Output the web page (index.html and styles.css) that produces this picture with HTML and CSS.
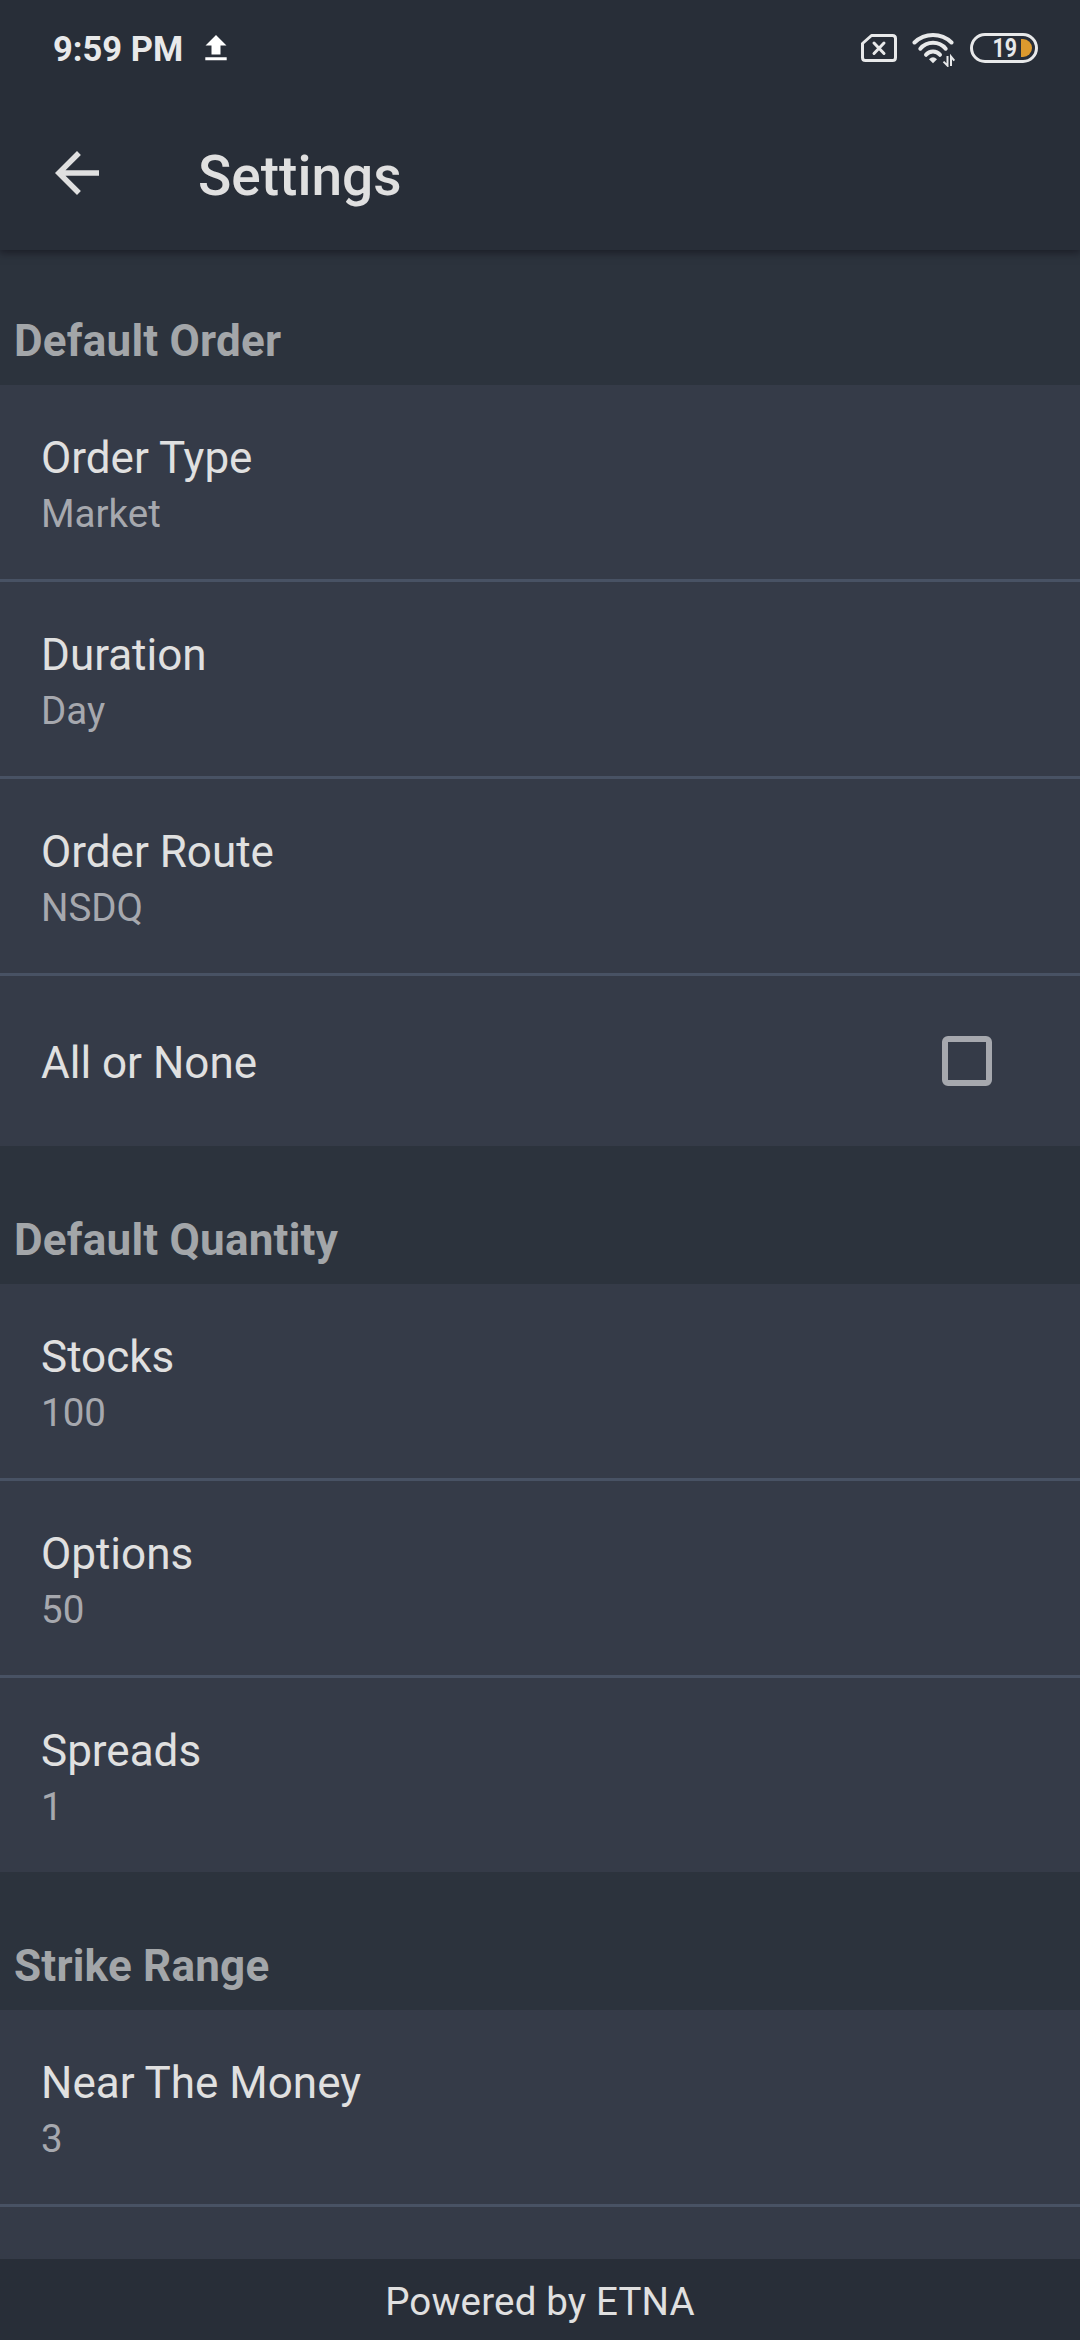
FILE: index.html
```html
<!DOCTYPE html>
<html lang="en">
<head>
<meta charset="utf-8">
<title>Settings</title>
<link rel="stylesheet" href="styles.css">
</head>
<body>
<div class="screen">
  <header class="top">
    <div class="status">
      <span class="clock">9:59 PM</span>
      <svg class="upload" width="22" height="26" viewBox="0 0 22 26"><path d="M11 0L21.500 10.500H15.500V19.500H6.500V10.500H.5zM.3 22.300H21.700V25.300H.3z" fill="#fff"/></svg>
      <svg class="sim" width="36" height="28" viewBox="0 0 36 28" fill="none" stroke="#e8e9ea"><path d="M10.500 1.500H31.500Q34.500 1.500 34.500 4.500V23.500Q34.500 26.500 31.500 26.500H4.500Q1.500 26.500 1.500 23.500V9.500z" stroke-width="3" stroke-linejoin="round"/><path d="M13 9L23 19.500M23 9L13 19.500" stroke-width="3" stroke-linecap="round"/></svg>
      <svg class="wifi" width="44" height="34" viewBox="0 0 44 34" fill="none" stroke="#e8e9ea"><g stroke-width="4" stroke-linecap="round"><path d="M2.500 9.500A26.600 26.600 0 0 1 39.500 9.500"/><path d="M8.300 15.700A16.500 16.500 0 0 1 33.700 15.700"/><path d="M14 21.800A9 9 0 0 1 28 21.800"/></g><path d="M17 26.300Q21 22.400 25 26.300L21 30.300z" fill="#e8e9ea" stroke="none"/><path d="M35.500 23V32.600L31.500 28.600M39 33V23.600L42.300 27.600" stroke-width="2"/></svg>
      <svg class="battery" width="68" height="30" viewBox="0 0 68 30"><rect x="1.500" y="1.500" width="65" height="27" rx="13.500" fill="none" stroke="#e8e9ea" stroke-width="3"/><path d="M51 6H53A9 9 0 0 1 53 24H51z" fill="#dd9a2e"/><text class="charge" x="22.500" y="24" textLength="24.500" lengthAdjust="spacingAndGlyphs">19</text></svg>
    </div>
    <div class="bar">
      <svg class="back" width="44" height="44" viewBox="0 0 44 44"><path d="M44 19.250V24.750H10.530L25.900 40.120L22 44L0 22L22 0L25.900 3.880L10.530 19.250z" fill="#e0e0e0"/></svg>
      <h1 class="title">Settings</h1>
    </div>
  </header>
  <main class="content">
    <h2 class="heading heading-first">Default Order</h2>
    <section class="group">
      <div class="row"><div class="label">Order Type</div><div class="value">Market</div></div>
      <div class="row"><div class="label">Duration</div><div class="value">Day</div></div>
      <div class="row"><div class="label">Order Route</div><div class="value">NSDQ</div></div>
      <div class="row row-check"><div class="label">All or None</div><span class="checkbox"></span></div>
    </section>
    <h2 class="heading">Default Quantity</h2>
    <section class="group">
      <div class="row"><div class="label">Stocks</div><div class="value">100</div></div>
      <div class="row"><div class="label">Options</div><div class="value">50</div></div>
      <div class="row"><div class="label">Spreads</div><div class="value">1</div></div>
    </section>
    <h2 class="heading">Strike Range</h2>
    <section class="group">
      <div class="row"><div class="label">Near The Money</div><div class="value">3</div></div>
      <div class="row"></div>
    </section>
  </main>
  <footer class="footer">Powered by ETNA</footer>
</div>
</body>
</html>
```
FILE: styles.css
```css
* { box-sizing: border-box; }
body { margin: 0; font-family: Roboto, "Noto Sans", sans-serif; color: #e0e0e0; }
.screen { width: 1080px; height: 2340px; display: flex; flex-direction: column; overflow: hidden; background: #2c333d; }
.top { flex: none; height: 250px; background: #282e38; box-shadow: 0 2px 8px 1px rgba(14, 12, 22, .55); z-index: 1; }
.status { height: 96px; padding-left: 53px; padding-right: 42px; display: flex; align-items: center; }
.clock { padding-top: 2px; font-size: 34.500px; line-height: 40px; font-weight: 700; color: #e8e9ea; width: 152px; white-space: nowrap; }
.sim { margin-left: auto; }
.wifi { margin-left: 15px; margin-top: 4px; }
.battery { margin-left: 14px; }
.charge { font-size: 25px; font-weight: 700; fill: #e8e9ea; }
.bar { height: 154px; padding-left: 55px; display: flex; align-items: flex-start; }
.back { margin-top: 55px; }
.title { margin: 48px 0 0 99px; font-size: 55px; line-height: 64px; font-weight: 500; }
.content { flex: 1; min-height: 0; overflow: hidden; }
.heading { margin: 0; height: 138px; padding: 68px 14px 0; font-size: 44px; line-height: 52px; font-weight: 700; letter-spacing: .22px; color: #a3a6a9; }
.heading-first { height: 135px; padding-top: 65px; }
.group { background: #353b48; }
.row { height: 197px; padding: 47px 41px 0; border-bottom: 3px solid #485264; }
.row:last-child { height: 194px; border-bottom: 0; }
.label { font-size: 44px; line-height: 52px; }
.value { margin-top: 7px; font-size: 38.500px; line-height: 46px; color: #a6a8ae; }
.row.row-check { height: 170px; padding: 0 88px 0 41px; display: flex; align-items: center; justify-content: space-between; }
.row-check .label { padding-top: 4px; }
.checkbox { width: 50px; height: 50px; border: 6px solid #a6a8ae; border-radius: 6px; }
.footer { flex: none; height: 81px; padding-top: 20px; text-align: center; background: #282e38; font-size: 38.500px; line-height: 46px; letter-spacing: .18px; }
```
